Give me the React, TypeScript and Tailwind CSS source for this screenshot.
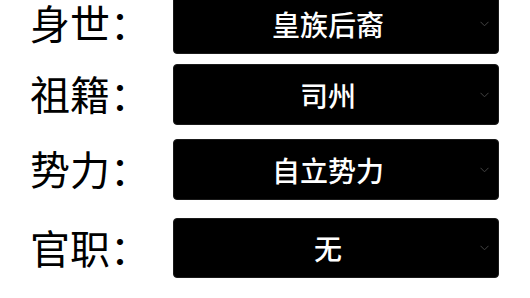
import React from "react";

const rows = [
  { label: "身世：", value: "皇族后裔", cls: "-mt-[7px] h-[61px]" },
  { label: "祖籍：", value: "司州", cls: "mt-[10px] h-[61px]" },
  { label: "势力：", value: "自立势力", cls: "mt-[14px] h-[61px]" },
  { label: "官职：", value: "无", cls: "mt-[18px] h-[60px]" },
];

function Chevron() {
  return (
    <svg width="9" height="6" viewBox="0 0 9 6" className="mr-[9px] shrink-0">
      <path d="M0.5 0.8 L4.5 4.8 L8.5 0.8" fill="none" stroke="#444444" strokeWidth="1" />
    </svg>
  );
}

export default function App() {
  return (
    <div
      className="w-[530px] h-[298px] overflow-hidden bg-white flex flex-col"
      style={{ fontFamily: '"Noto Sans CJK SC", "Noto Sans", sans-serif' }}
    >
      {rows.map((r) => (
        <div key={r.label} className={`flex items-center shrink-0 ${r.cls}`}>
          <div className="w-[173px] shrink-0 pl-[30px] text-[40px] leading-[44px] font-normal text-black -mt-[3px] whitespace-nowrap">
            {r.label}
          </div>
          <div className="w-[326px] h-full bg-black rounded-[4px] border border-[#1a1a1a] flex items-center">
            <div className="flex-1 pl-[2px] text-center text-white text-[28px] font-medium leading-none">
              {r.value}
            </div>
            <Chevron />
          </div>
        </div>
      ))}
    </div>
  );
}
